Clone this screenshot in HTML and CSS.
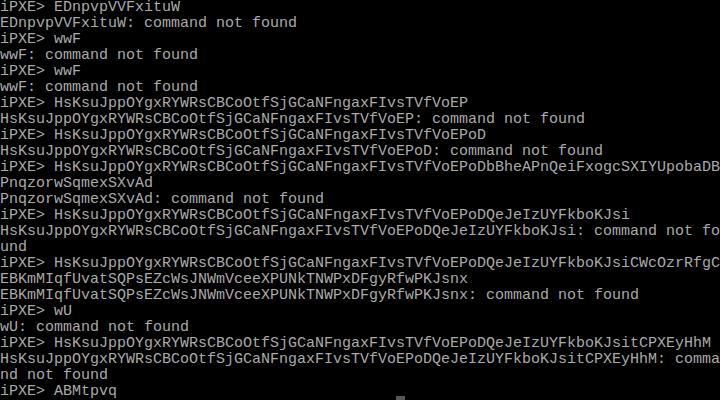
FILE: index.html
```html
<!DOCTYPE html>
<html>
<head>
<meta charset="utf-8">
<link rel="stylesheet" href="styles.css">
</head>
<body>
<div class="console">
<pre class="screen">iPXE&gt; EDnpvpVVFxituW
EDnpvpVVFxituW: command not found
iPXE&gt; wwF
wwF: command not found
iPXE&gt; wwF
wwF: command not found
iPXE&gt; HsKsuJppOYgxRYWRsCBCoOtfSjGCaNFngaxFIvsTVfVoEP
HsKsuJppOYgxRYWRsCBCoOtfSjGCaNFngaxFIvsTVfVoEP: command not found
iPXE&gt; HsKsuJppOYgxRYWRsCBCoOtfSjGCaNFngaxFIvsTVfVoEPoD
HsKsuJppOYgxRYWRsCBCoOtfSjGCaNFngaxFIvsTVfVoEPoD: command not found
iPXE&gt; HsKsuJppOYgxRYWRsCBCoOtfSjGCaNFngaxFIvsTVfVoEPoDbBheAPnQeiFxogcSXIYUpobaDB
PnqzorwSqmexSXvAd
PnqzorwSqmexSXvAd: command not found
iPXE&gt; HsKsuJppOYgxRYWRsCBCoOtfSjGCaNFngaxFIvsTVfVoEPoDQeJeIzUYFkboKJsi
HsKsuJppOYgxRYWRsCBCoOtfSjGCaNFngaxFIvsTVfVoEPoDQeJeIzUYFkboKJsi: command not fo
und
iPXE&gt; HsKsuJppOYgxRYWRsCBCoOtfSjGCaNFngaxFIvsTVfVoEPoDQeJeIzUYFkboKJsiCWcOzrRfgC
EBKmMIqfUvatSQPsEZcWsJNWmVceeXPUNkTNWPxDFgyRfwPKJsnx
EBKmMIqfUvatSQPsEZcWsJNWmVceeXPUNkTNWPxDFgyRfwPKJsnx: command not found
iPXE&gt; wU
wU: command not found
iPXE&gt; HsKsuJppOYgxRYWRsCBCoOtfSjGCaNFngaxFIvsTVfVoEPoDQeJeIzUYFkboKJsitCPXEyHhM
HsKsuJppOYgxRYWRsCBCoOtfSjGCaNFngaxFIvsTVfVoEPoDQeJeIzUYFkboKJsitCPXEyHhM: comma
nd not found
iPXE&gt; ABMtpvq</pre>
<span class="cursor"></span>
</div>
</body>
</html>
```
FILE: styles.css
```css
html, body {
  margin: 0;
  padding: 0;
  background: #000;
  width: 720px;
  height: 400px;
  overflow: hidden;
}
.console {
  position: relative;
  width: 720px;
  height: 400px;
}
.screen {
  margin: 0;
  font-family: "Liberation Mono", monospace;
  font-size: 15px;
  line-height: 16px;
  color: #aaaaaa;
  white-space: pre;
}
.cursor {
  position: absolute;
  left: 396px;
  top: 396px;
  width: 9px;
  height: 4px;
  background: #555555;
}
```
